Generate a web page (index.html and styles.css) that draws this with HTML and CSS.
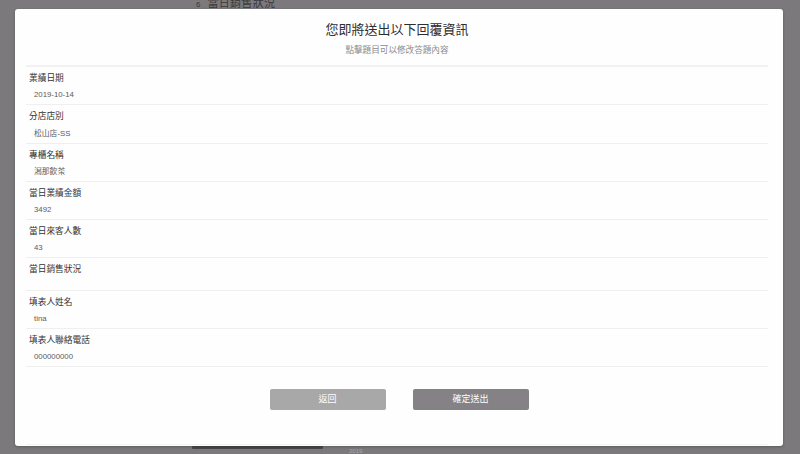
FILE: index.html
```html
<!DOCTYPE html>
<html lang="zh-Hant">
<head>
<meta charset="utf-8">
<title>確認送出</title>
<link rel="stylesheet" href="styles.css">
</head>
<body>
<div class="page">
  <div class="page-q"><span class="q-num">6</span><span class="q-title">當日銷售狀況</span></div>
  <div class="page-bottom"><span class="bar"></span><span class="page-date">2019</span></div>
</div>
<div class="modal">
  <header class="modal-head">
    <h1 class="modal-title">您即將送出以下回覆資訊</h1>
    <p class="modal-sub">點擊題目可以修改答題內容</p>
  </header>
  <ul class="answers">
    <li class="answer"><div class="q">業績日期</div><div class="a">2019-10-14</div></li>
    <li class="answer"><div class="q">分店店別</div><div class="a">松山店-SS</div></li>
    <li class="answer"><div class="q">專櫃名稱</div><div class="a">潟那飲茶</div></li>
    <li class="answer"><div class="q">當日業績金額</div><div class="a">3492</div></li>
    <li class="answer"><div class="q">當日來客人數</div><div class="a">43</div></li>
    <li class="answer"><div class="q">當日銷售狀況</div><div class="a a-empty"></div></li>
    <li class="answer"><div class="q">填表人姓名</div><div class="a">tina</div></li>
    <li class="answer"><div class="q">填表人聯絡電話</div><div class="a">000000000</div></li>
  </ul>
  <footer class="modal-foot">
    <button class="btn btn-back">返回</button>
    <button class="btn btn-send">確定送出</button>
  </footer>
</div>
</body>
</html>
```

FILE: styles.css
```css
* { box-sizing: border-box; }
html, body {
  margin: 0;
  padding: 0;
  width: 800px;
  height: 454px;
  overflow: hidden;
  font-family: "Liberation Sans", "Noto Sans CJK TC", sans-serif;
  background: #7b797b;
}
.page {
  position: relative;
  width: 800px;
  height: 454px;
}
.page-q {
  position: absolute;
  left: 196px;
  top: -4px;
  font-size: 11px;
  line-height: 14px;
  color: #3c3a3c;
}
.q-num { font-size: 8px; margin-right: 7px; }
.q-title { letter-spacing: 0.3px; }
.page-bottom {
  position: absolute;
  left: 192px;
  top: 446px;
  display: flex;
  align-items: flex-start;
  gap: 26px;
}
.bar {
  display: block;
  width: 131px;
  height: 3px;
  background: #4a484a;
  border-radius: 1px;
}
.page-date {
  font-size: 6px;
  line-height: 8px;
  color: #a9a7a9;
  margin-top: 1px;
}
.modal {
  position: absolute;
  left: 15px;
  top: 9px;
  width: 768px;
  height: 437px;
  background: #fefefe;
  border-radius: 3px;
  box-shadow: 0 1px 3px rgba(0,0,0,0.25);
  display: flex;
  flex-direction: column;
  padding: 0 15px 0 11px;
}
.modal-head {
  text-align: center;
  padding-top: 11px;
  border-bottom: 2px solid #f2f1f2;
  height: 58px;
}
.modal-title {
  margin: 0;
  font-size: 13px;
  line-height: 20px;
  font-weight: normal;
  color: #2e2e2e;
}
.modal-sub {
  margin: 0;
  margin-top: 3px;
  font-size: 8.6px;
  line-height: 14px;
  color: #8a8a8a;
}
.answers {
  list-style: none;
  margin: 0;
  padding: 0;
}
.answer {
  padding: 5px 0 3px 3px;
  border-bottom: 1px solid #efefef;
}
.q {
  font-size: 8.7px;
  line-height: 13.25px;
  color: #333;
}
.a {
  margin-top: 4px;
  padding-left: 5px;
  font-size: 7.8px;
  line-height: 12px;
  color: #5a5a5a;
}
.a-empty { height: 6px; }
.modal-foot {
  margin-top: 22px;
  display: flex;
  justify-content: center;
  gap: 27px;
  padding-left: 4px;
  height: 56px;
  border-bottom: 1px solid #f4f2f4;
}
.btn {
  width: 116px;
  height: 21px;
  border: none;
  border-radius: 2px;
  color: #fff;
  font-family: "Liberation Sans", "Noto Sans CJK TC", sans-serif;
  font-size: 9px;
  line-height: 21px;
  padding: 0;
}
.btn-back { background: #a9a8a9; }
.btn-send { background: #848284; }
```
